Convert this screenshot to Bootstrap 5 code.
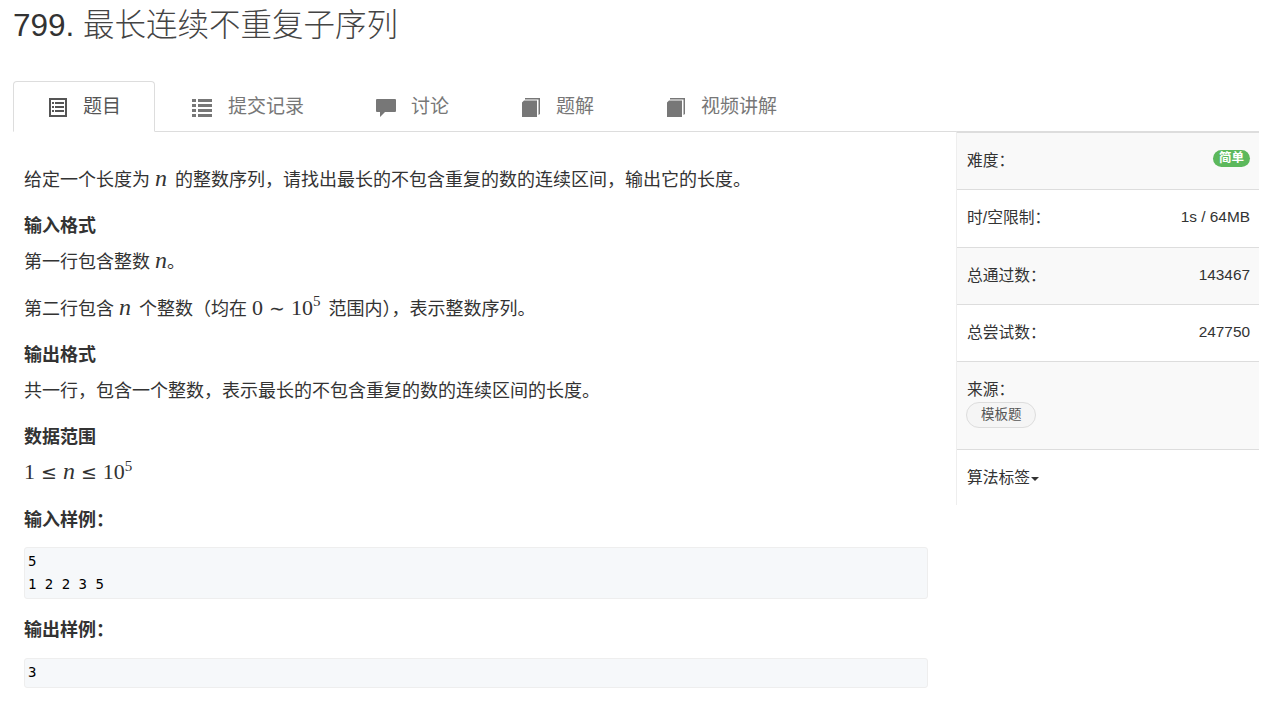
<!DOCTYPE html>
<html lang="zh">
<head>
    <meta charset="UTF-8">
    <meta name="viewport" content="width=device-width, initial-scale=1.0">
    <title>799. 最长连续不重复子序列</title>
    <link href="https://cdn.jsdelivr.net/npm/bootstrap@5.3.0/dist/css/bootstrap.min.css" rel="stylesheet">
    <style>
        body {
            background: #fff;
            color: #333;
            font-family: "Liberation Sans", "Noto Sans CJK SC", sans-serif;
            font-size: 15.75px;
            overflow: hidden;
            height: 715px;
        }
        .page-wrap { padding-left: 13px; width: 1259px; }
        .prob-title {
            font-size: 31.5px;
            font-weight: 300;
            line-height: 34px;
            margin: 0;
            padding-top: 8px;
            height: 81px;
            color: #333;
        }
        .prob-title span { font-weight: 300; color: #444; }
        .prob-tabs { border-bottom: 1px solid #ddd; width: 943px; height: 51px; flex-wrap: nowrap; }
        .prob-tabs .nav-link {
            height: 51px;
            padding: 0 33px 0 35px;
            font-size: 19px;
            line-height: 24px;
            color: #777;
            border: 1px solid transparent;
            border-radius: 4px 4px 0 0;
            margin: 0;
            white-space: nowrap;
            display: flex;
            align-items: center;
            gap: 16px;
        }
        .prob-tabs .nav-link.active { color: #555; border-color: #ddd #ddd #fff; background: #fff; }
        .prob-tabs svg { flex: none; fill: #777; margin-top: 2px; }
        .prob-tabs .active svg { fill: #555; }
        .prob-tabs .ico-list { margin-left: 1px; }
        .prob-tabs .ico-chat { margin-left: 2px; margin-right: -1px; }
        .prob-tabs .ico-book { margin-left: 3px; }
        .prob-body { width: 943px; padding: 35px 28px 0 11px; }
        .prob-body p { font-size: 18px; line-height: 26.2px; margin: 0 0 20px; }
        .prob-body h5 { font-size: 18px; font-weight: 700; line-height: 26.2px; margin: 0 0 10px; color: #333; }
        .mth { font-family: "Liberation Serif", serif; font-size: 22px; line-height: 0; margin-right: 3px; }
        .mth.mth-end { margin-right: 0; }
        .mth i { font-size: 24px; line-height: 0; }
        .mth sup { font-size: 15px; top: -0.55em; line-height: 0; }
        .mth .rel { font-family: "DejaVu Sans", sans-serif; font-size: 19px; margin: 0 6px; line-height: 0; }
        .sample {
            background: #f6f8fa;
            border: 1px solid #eee;
            border-radius: 3px;
            padding: 2px 3px;
            margin: 14.5px 0 18px;
            min-height: 30px;
            font-family: "DejaVu Sans Mono", monospace;
            font-size: 14px;
            line-height: 23px;
            color: #000;
            white-space: pre;
            overflow: hidden;
        }
        .side-wrap {
            width: 303px;
            margin-top: 131px;
            border-top: 2px solid #ddd;
            border-left: 1px solid #eee;
            height: 374px;
            flex: none;
        }
        .side-row {
            display: flex;
            justify-content: space-between;
            padding: 18px 9px 0 10px;
            line-height: 20px;
            border-bottom: 1px solid #ddd;
            height: 57.3px;
        }
        .side-row.alt { background: #f9f9f9; }
        .side-row.tall { display: block; height: 88px; }
        .side-row.last { border-bottom: 0; }
        .side-val { font-size: 15.4px; margin-top: -1px; }
        .level-pill {
            background: #5cb85c;
            color: #fff;
            font-size: 12.5px;
            font-weight: 700;
            line-height: 12px;
            padding: 2px 6px 3px;
            border-radius: 10px;
            height: 17px;
            margin-top: -1px;
        }
        .src-pill {
            display: inline-block;
            background: #f5f5f5;
            border: 1px solid #ddd;
            border-radius: 13px;
            color: #555;
            font-size: 13.5px;
            line-height: 24px;
            padding: 0 13px 0 14px;
            margin: 2px 0 0 -1px;
        }
        .tag-caret {
            display: inline-block;
            border-top: 4px solid #333;
            border-left: 4px solid transparent;
            border-right: 4px solid transparent;
            vertical-align: 2px;
            margin-left: 1px;
        }
    </style>
</head>
<body>
    <div class="page-wrap d-flex">
        <div>
            <h1 class="prob-title">799. <span>最长连续不重复子序列</span></h1>
            <ul class="nav nav-tabs prob-tabs">
                <li class="nav-item">
                    <a class="nav-link active" href="#">
                        <svg width="18" height="19" viewBox="0 0 18 19"><path fill-rule="evenodd" d="M0 0h18v19H0zM2 2v15h14V2zM3 4h2v2H3zM6 4h9v2H6zM3 8h2v2H3zM6 8h9v2H6zM3 12h2v2H3zM6 12h9v2H6z"/></svg>
                        题目
                    </a>
                </li>
                <li class="nav-item">
                    <a class="nav-link" href="#">
                        <svg class="ico-list" width="20" height="18" viewBox="0 0 20 18"><path d="M0 0h4v3H0zM6 0h14v3H6zM0 5h4v3H0zM6 5h14v3H6zM0 10h4v3H0zM6 10h14v3H6zM0 15h4v3H0zM6 15h14v3H6z"/></svg>
                        提交记录
                    </a>
                </li>
                <li class="nav-item">
                    <a class="nav-link" href="#">
                        <svg class="ico-chat" width="20" height="18" viewBox="0 0 20 18"><path d="M1 0h18a1 1 0 0 1 1 1v11a1 1 0 0 1-1 1H9l-5 5v-5H1a1 1 0 0 1-1-1V1a1 1 0 0 1 1-1z"/></svg>
                        讨论
                    </a>
                </li>
                <li class="nav-item">
                    <a class="nav-link" href="#">
                        <svg class="ico-book" width="18" height="19" viewBox="0 0 18 19"><path d="M0 4.500 2 2.500h13V19H0zM3 0h15v16l-1.500 1V1.500H3z"/></svg>
                        题解
                    </a>
                </li>
                <li class="nav-item">
                    <a class="nav-link" href="#">
                        <svg class="ico-book" width="18" height="19" viewBox="0 0 18 19"><path d="M0 4.500 2 2.500h13V19H0zM3 0h15v16l-1.500 1V1.500H3z"/></svg>
                        视频讲解
                    </a>
                </li>
            </ul>
            <div class="prob-body">
                <p>给定一个长度为 <span class="mth"><i>n</i></span> 的整数序列，请找出最长的不包含重复的数的连续区间，输出它的长度。</p>
                <h5>输入格式</h5>
                <p>第一行包含整数 <span class="mth mth-end"><i>n</i></span>。</p>
                <p>第二行包含 <span class="mth"><i>n</i></span> 个整数（均在 <span class="mth">0<span class="rel">∼</span>10<sup>5</sup></span> 范围内），表示整数序列。</p>
                <h5>输出格式</h5>
                <p>共一行，包含一个整数，表示最长的不包含重复的数的连续区间的长度。</p>
                <h5>数据范围</h5>
                <p><span class="mth"><span>1</span><span class="rel">≤</span><i>n</i><span class="rel">≤</span>10<sup>5</sup></span></p>
                <h5>输入样例：</h5>
                <pre class="sample">5
1 2 2 3 5</pre>
                <h5>输出样例：</h5>
                <pre class="sample">3</pre>
            </div>
        </div>
        <div class="side-wrap">
            <div class="side-row alt"><span>难度：</span><span class="level-pill">简单</span></div>
            <div class="side-row"><span>时/空限制：</span><span class="side-val">1s / 64MB</span></div>
            <div class="side-row alt"><span>总通过数：</span><span class="side-val">143467</span></div>
            <div class="side-row"><span>总尝试数：</span><span class="side-val">247750</span></div>
            <div class="side-row alt tall"><div>来源：</div><span class="src-pill">模板题</span></div>
            <div class="side-row last"><span>算法标签<span class="tag-caret"></span></span></div>
        </div>
    </div>
    <script src="https://cdn.jsdelivr.net/npm/bootstrap@5.3.0/dist/js/bootstrap.bundle.min.js"></script>
</body>
</html>
